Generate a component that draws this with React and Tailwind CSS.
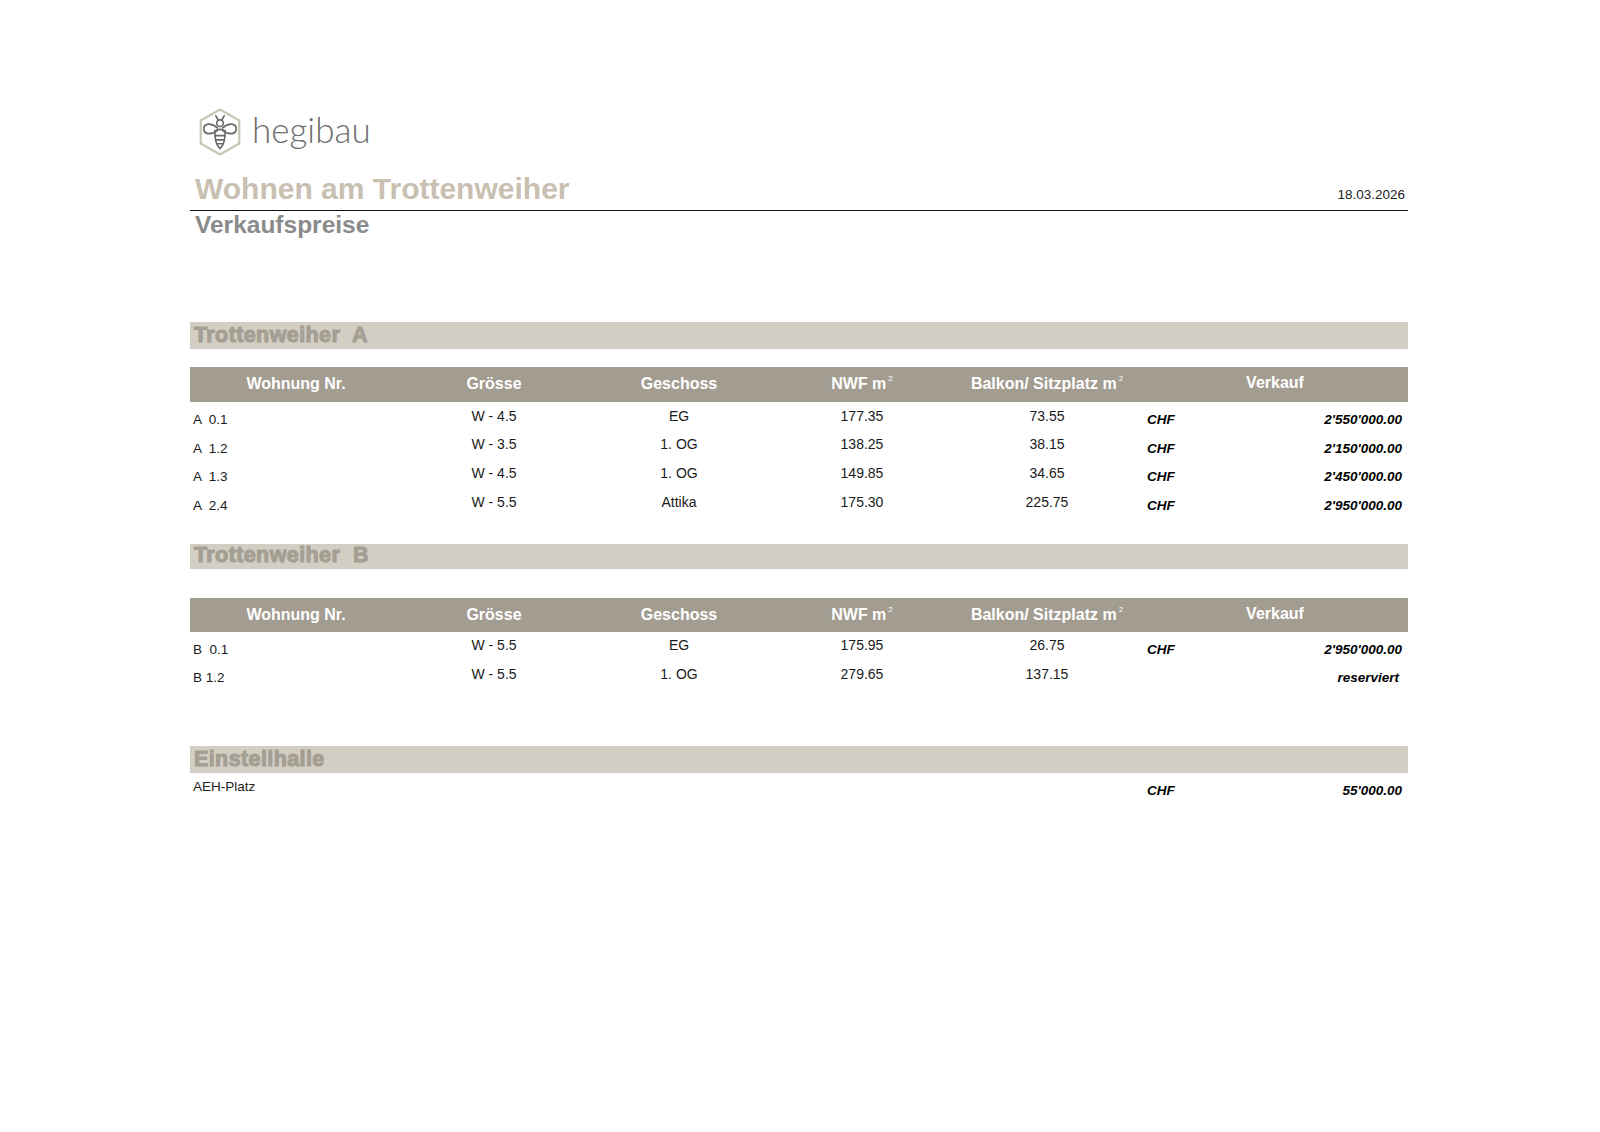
import React from 'react'

const cols = 'grid grid-cols-[212px_184px_186px_180px_190px_1fr]'

const blockA = [
  { nr: 'A  0.1', size: 'W - 4.5', floor: 'EG', nwf: '177.35', balkon: '73.55', price: "2'550'000.00" },
  { nr: 'A  1.2', size: 'W - 3.5', floor: '1. OG', nwf: '138.25', balkon: '38.15', price: "2'150'000.00" },
  { nr: 'A  1.3', size: 'W - 4.5', floor: '1. OG', nwf: '149.85', balkon: '34.65', price: "2'450'000.00" },
  { nr: 'A  2.4', size: 'W - 5.5', floor: 'Attika', nwf: '175.30', balkon: '225.75', price: "2'950'000.00" },
]

const blockB = [
  { nr: 'B  0.1', size: 'W - 5.5', floor: 'EG', nwf: '175.95', balkon: '26.75', price: "2'950'000.00" },
  { nr: 'B 1.2', size: 'W - 5.5', floor: '1. OG', nwf: '279.65', balkon: '137.15', reserved: true },
]

function Logo() {
  return (
    <svg width="50" height="50" viewBox="0 0 48 48" fill="none">
      <path
        d="M24 2.5 L42.5 13 L42.5 35 L24 45.5 L5.5 35 L5.5 13 Z"
        stroke="#cbc4b8"
        strokeWidth="2.2"
        strokeLinejoin="round"
      />
      <g stroke="#6a6a6a" strokeWidth="1.6" strokeLinecap="round" strokeLinejoin="round">
        <path d="M22.2 12.5 L20 8.5 M25.8 12.5 L28 8.5" />
        <circle cx="24" cy="15.5" r="3.2" />
        <path d="M21.5 20 C15.5 14.5 8 15.5 8.5 21.5 C9 27 17 26.5 21.5 22.5" />
        <path d="M26.5 20 C32.5 14.5 40 15.5 39.5 21.5 C39 27 31 26.5 26.5 22.5" />
        <path d="M19 23 C19 32.5 21 37.5 24 40 C27 37.5 29 32.5 29 23 C26.5 21 21.5 21 19 23 Z" />
        <path d="M19.3 27.5 L28.7 27.5 M19.8 31.5 L28.2 31.5 M21.2 35.3 L26.8 35.3" />
      </g>
    </svg>
  )
}

function Band({ title, className }) {
  return (
    <div className={`flex items-center bg-[#d3cec3] pl-[4px] ${className}`}>
      <span className="whitespace-pre text-[21.5px] font-bold leading-none tracking-[0.4px] text-[#a49e93] [-webkit-text-stroke:1.1px_#a49e93]">
        {title}
      </span>
    </div>
  )
}

function Sup() {
  return <sup className="relative -top-[8px] ml-[2px] text-[8px] font-normal">2</sup>
}

function TableHead({ className }) {
  return (
    <div className={`${cols} items-center bg-[#a39c90] text-[16px] font-bold text-white ${className}`}>
      <div className="text-center">Wohnung Nr.</div>
      <div className="text-center">Grösse</div>
      <div className="text-center">Geschoss</div>
      <div className="text-center">
        NWF m<Sup />
      </div>
      <div className="text-center">
        Balkon/ Sitzplatz m<Sup />
      </div>
      <div className="-mt-[2px] text-center">Verkauf</div>
    </div>
  )
}

function Row({ row }) {
  return (
    <div className={`${cols} h-[28.7px] text-[14px] text-[#1a1a1a]`}>
      <div className="flex items-center whitespace-pre pl-[3px] pt-[8px] text-[13.5px]">{row.nr}</div>
      <div className="flex items-center justify-center">{row.size}</div>
      <div className="flex items-center justify-center">{row.floor}</div>
      <div className="flex items-center justify-center">{row.nwf}</div>
      <div className="flex items-center justify-center">{row.balkon}</div>
      <div className="flex items-center justify-between pl-[5px] pr-[6px] pt-[8px] text-[13.5px] font-bold italic text-black">
        {row.reserved ? (
          <>
            <span />
            <span className="pr-[3px]">reserviert</span>
          </>
        ) : (
          <>
            <span>CHF</span>
            <span>{row.price}</span>
          </>
        )}
      </div>
    </div>
  )
}

export default function App() {
  return (
    <div className="min-h-[1132px] bg-white font-['Liberation_Sans',Arial,sans-serif]">
      <div className="ml-[190px] w-[1218px] pt-[107px]">
        {/* Logo */}
        <div className="flex h-[49px] items-center gap-[7px] pl-[5px]">
          <Logo />
          <span className="pb-[4px] font-['Lato',sans-serif] text-[35px] font-light leading-none text-[#6e6e6e]">
            hegibau
          </span>
        </div>

        {/* Title */}
        <div className="mt-[18px] flex items-baseline justify-between border-b-[1.5px] border-[#111] pb-[5px]">
          <h1 className="pl-[5px] text-[30px] font-bold leading-none text-[#c9c0b2]">Wohnen am Trottenweiher</h1>
          <span className="pr-[3px] text-[13.5px] text-[#222]">18.03.2026</span>
        </div>
        <h2 className="mt-[2px] pl-[5px] text-[24.5px] font-bold leading-none text-[#8b8b8b]">Verkaufspreise</h2>

        {/* Trottenweiher A */}
        <Band title="Trottenweiher  A" className="mt-[84px] h-[27px]" />
        <TableHead className="mt-[18px] h-[35px]" />
        {blockA.map((row) => (
          <Row key={row.nr} row={row} />
        ))}

        {/* Trottenweiher B */}
        <Band title="Trottenweiher  B" className="mt-[27px] h-[25px]" />
        <TableHead className="mt-[29px] h-[34px]" />
        {blockB.map((row) => (
          <Row key={row.nr} row={row} />
        ))}

        {/* Einstellhalle */}
        <Band title="Einstellhalle" className="mt-[57px] h-[27px]" />
        <div className={`${cols} h-[28.7px] text-[13.5px]`}>
          <div className="flex items-center pl-[3px] text-[#222]">AEH-Platz</div>
          <div />
          <div />
          <div />
          <div />
          <div className="flex items-center justify-between pl-[5px] pr-[6px] pt-[8px] font-bold italic text-black">
            <span>CHF</span>
            <span>55'000.00</span>
          </div>
        </div>
      </div>
    </div>
  )
}
